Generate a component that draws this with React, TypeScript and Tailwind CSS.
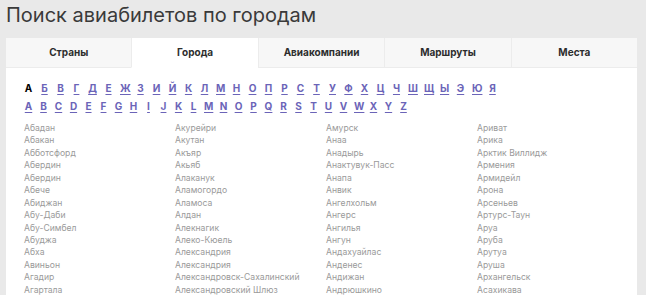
const tabs = ["Страны", "Города", "Авиакомпании", "Маршруты", "Места"];

const ru = "А Б В Г Д Е Ж З И Й К Л М Н О П Р С Т У Ф Х Ц Ч Ш Щ Ы Э Ю Я".split(" ");
const en = "A B C D E F G H I J K L M N O P Q R S T U V W X Y Z".split(" ");

const columns = [
  ["Абадан", "Абакан", "Абботсфорд", "Абердин", "Абердин", "Абече", "Абиджан", "Абу-Даби", "Абу-Симбел", "Абуджа", "Абха", "Авиньон", "Агадир", "Агартала"],
  ["Акурейри", "Акутан", "Акъяр", "Акьяб", "Алаканук", "Аламогордо", "Аламоса", "Алдан", "Алекнагик", "Алеко-Кюель", "Александрия", "Александрия", "Александровск-Сахалинский", "Александровский Шлюз"],
  ["Амурск", "Анаа", "Анадырь", "Анактувук-Пасс", "Анапа", "Анвик", "Ангелхольм", "Ангерс", "Ангилья", "Ангун", "Андахуайлас", "Анденес", "Андижан", "Андрюшкино"],
  ["Ариват", "Арика", "Арктик Виллидж", "Армения", "Армидейл", "Арона", "Арсеньев", "Артурс-Таун", "Аруа", "Аруба", "Арутуа", "Аруша", "Архангельск", "Асахикава"],
];

export default function App() {
  return (
    <div className="w-[646px] h-[295px] overflow-hidden bg-[#e9e9e9] font-['Inter',sans-serif]">
      <h1 className="pl-[6px] pt-[1px] text-[20px] leading-[28px] font-normal text-[#3a3a3a]">
        Поиск авиабилетов по городам
      </h1>
      <div className="ml-[6px] mt-[9px] w-[631px] bg-white">
        <div className="flex h-[30px]">
          {tabs.map((t, i) => (
            <div
              key={t}
              className={`flex-1 flex items-center justify-center text-[10px] font-bold text-[#2d2d2d] ${
                i === 1 ? "bg-white" : "bg-[#f7f7f7]"
              } ${i > 0 ? "border-l border-[#ececec]" : ""} border-b ${i === 1 ? "border-b-white" : "border-b-[#ececec]"}`}
            >
              {t}
            </div>
          ))}
        </div>
        <div className="pl-[18px] pt-[11px]">
          <div className="flex gap-[7px] h-[18px] items-center text-[10px] font-bold">
            {ru.map((l, i) => (
              <span
                key={l}
                className={`w-[9px] text-center ${i === 0 ? "text-black" : "text-[#6b64b8] underline underline-offset-2"}`}
              >
                {l}
              </span>
            ))}
          </div>
          <div className="flex gap-[6px] h-[18px] items-center text-[10px] font-bold">
            {en.map((l) => (
              <span key={l} className="w-[9px] text-center text-[#6b64b8] underline underline-offset-2">
                {l}
              </span>
            ))}
          </div>
          <div className="flex mt-[7px]">
            {columns.map((col, ci) => (
              <div key={ci} className="w-[151px] flex flex-col">
                {col.map((c, ri) => (
                  <div key={ri} className="h-[12.45px] leading-[12.45px] text-[8.6px] text-[#9a9a9a] whitespace-nowrap">
                    {c}
                  </div>
                ))}
              </div>
            ))}
          </div>
        </div>
      </div>
    </div>
  );
}
